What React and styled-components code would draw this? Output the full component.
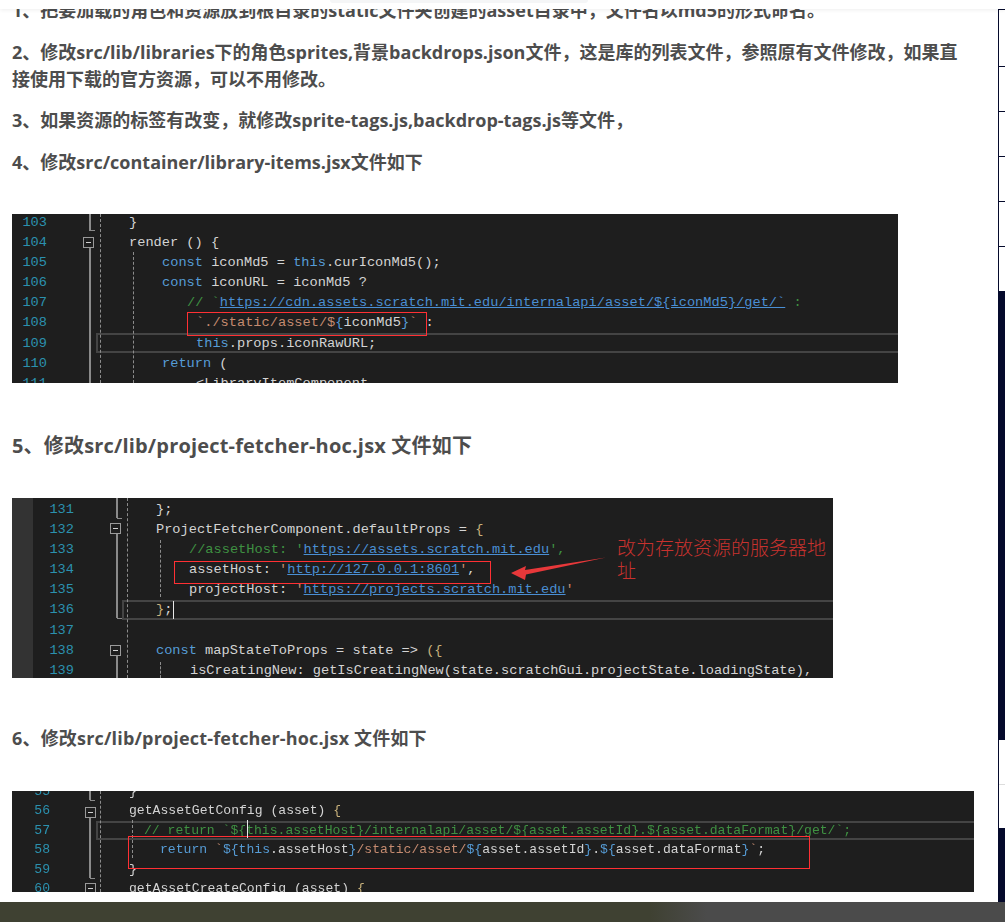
import React from "react";
import styled, { createGlobalStyle } from "styled-components";

const Global = createGlobalStyle`
  html, body { margin: 0; padding: 0; height: 100%; overflow: hidden; background: #fff; }
  #root { height: 100%; }
`;

const Page = styled.div`
  position: relative;
  width: 1005px;
  height: 922px;
  display: grid;
  grid-template-rows: 902px 20px;
  overflow: hidden;
`;
const TopBar = styled.header`
  position: absolute;
  top: 0; left: 0; right: 0;
  height: 9px;
  background: #fff;
  box-shadow: 0 1px 4px rgba(0,0,0,.07);
  padding-left: 330px;
  z-index: 5;
`;
const SearchPill = styled.div`
  width: 258px;
  height: 3px;
  background: #f5f6f7;
  border-radius: 0 0 6px 6px;
`;
const Body = styled.div`
  display: grid;
  grid-template-columns: 998px 7px;
  overflow: hidden;
`;
const Article = styled.main`
  padding: 0 0 0 12px;
  margin-top: -3px;
  font-family: "Open Sans", "Noto Sans CJK SC", sans-serif;
  color: #4d4d4d;
  overflow: hidden;
`;
const Para = styled.p`
  margin: 0 0 ${p => p.$after ?? 14.5}px;
  width: 950px;
  font-size: 18px;
  font-weight: 700;
  line-height: 27px;
  letter-spacing: ${p => p.$track ?? 0}px;
`;
const Heading = styled.h2`
  margin: 0;
  font-size: 20px;
  font-weight: 700;
  line-height: 30px;
  letter-spacing: .18px;
`;
const Shot = styled.div`
  position: relative;
  width: ${p => p.$w}px;
  height: ${p => p.$h}px;
  margin: ${p => p.$top}px 0 ${p => p.$bottom}px;
  overflow: hidden;
  background: ${p => p.$rail
    ? `linear-gradient(90deg, #333 0, #333 ${p.$rail}px, #1e1e1e ${p.$rail}px)`
    : "#1e1e1e"};
  font-family: "Liberation Mono", monospace;
  font-size: ${p => p.$size}px;
  line-height: ${p => p.$lh}px;
  color: #d4d4d4;
`;
const Lines = styled.div`
  margin-top: ${p => p.$shift}px;
  filter: ${p => p.$soft ? "blur(.4px)" : "none"};
`;
const Line = styled.div`
  display: flex;
  height: ${p => p.$lh}px;
  white-space: pre;
`;
const Num = styled.span`
  flex: none;
  width: ${p => p.$w}px;
  text-align: right;
  color: #2b91af;
`;
const Code = styled.span`
  padding-left: ${p => p.$indent}px;
`;
const Kw = styled.span`color: #569cd6;`;
const Str = styled.span`color: #c58b70;`;
const Cm = styled.span`color: #3f9142;`;
const Lk = styled.span`color: #4a8fd4; text-decoration: underline;`;
const Br = styled.span`color: #c9b27c;`;

const Rule = styled.div`
  position: absolute;
  left: ${p => p.$x}px;
  top: ${p => p.$y}px;
  height: ${p => p.$h}px;
  border-left: 2px solid #8a8a8a;
`;
const Tick = styled.div`
  position: absolute;
  left: ${p => p.$x}px;
  top: ${p => p.$y}px;
  width: 5px;
  border-top: 1px solid #8a8a8a;
`;
const Guide = styled.div`
  position: absolute;
  left: ${p => p.$x}px;
  top: ${p => p.$y}px;
  height: ${p => p.$h}px;
  border-left: 1px dashed #8c8c8c;
`;
const Fold = styled.div`
  position: absolute;
  left: ${p => p.$x}px;
  top: ${p => p.$y}px;
  width: 9px;
  height: 9px;
  border: 1px solid #9a9a9a;
  background: #1e1e1e;
  &::after {
    content: "";
    position: absolute;
    left: 2px; right: 2px; top: 4px;
    border-top: 1px solid #d0d0d0;
  }
`;
const CurrentLine = styled.div`
  position: absolute;
  left: ${p => p.$x}px;
  right: 0;
  top: ${p => p.$y}px;
  height: ${p => p.$h}px;
  border: 2px solid #444;
  border-right: 0;
  box-sizing: border-box;
`;
const RedBox = styled.div`
  position: absolute;
  left: ${p => p.$x}px;
  top: ${p => p.$y}px;
  width: ${p => p.$w}px;
  height: ${p => p.$h}px;
  box-sizing: border-box;
  border: 1px solid #ff3034;
`;
const Caret = styled.div`
  position: absolute;
  left: ${p => p.$x}px;
  top: ${p => p.$y}px;
  height: 18px;
  border-left: 1px solid #e8e8e8;
`;
const Note = styled.div`
  position: absolute;
  left: 605px;
  top: 37px;
  width: 212px;
  font-family: "Noto Sans CJK SC", sans-serif;
  font-weight: 300;
  font-size: 19px;
  line-height: 23.5px;
  color: #c8322e;
`;
const ArrowMark = styled.svg`
  position: absolute;
  left: 488px;
  top: 56px;
`;

const Side = styled.aside`
  display: flex;
  flex-direction: column;
  padding-top: 9px;
  background: #050a2c;
  overflow: hidden;
`;
const SideTable = styled.div`
  background: #fff;
  border-left: 1px solid #050a2c;
`;
const SideRow = styled.div`
  height: ${p => p.$h}px;
  box-sizing: border-box;
  border-top: 1px solid #050a2c;
`;
const SideFill = styled.div`
  height: ${p => p.$h}px;
  flex: none;
`;
const SideCard = styled.div`
  height: 88px;
  flex: none;
  margin-left: 1px;
  background: #fff;
  display: flex;
  flex-direction: column;
`;
const SideCardPart = styled.div`
  flex: 1;
  & + & { border-top: 1px solid #ddd; }
`;
const Footer = styled.footer`
  background: linear-gradient(90deg, #3f4132 0, #3f4132 650px, #4b4b4b 707px);
`;

const L = ({ n, indent, g, lh, children }) => (
  <Line $lh={lh}>
    <Num $w={g}>{n}</Num>
    <Code $indent={indent}>{children}</Code>
  </Line>
);

export default function App() {
  const a = { g: 35, lh: 20.2 };
  const b = { g: 62, lh: 20.2 };
  const c = { g: 38, lh: 19.5 };
  return (
    <Page>
      <Global />
      <TopBar><SearchPill /></TopBar>
      <Body>
        <Article>
          <Para>1、把要加载的角色和资源放到根目录的static文件夹创建的asset目录中，文件名以md5的形式命名。</Para>
          <Para>2、修改src/lib/libraries下的角色sprites,背景backdrops.json文件，这是库的列表文件，参照原有文件修改，如果直接使用下载的官方资源，可以不用修改。</Para>
          <Para>3、如果资源的标签有改变，就修改sprite-tags.js,backdrop-tags.js等文件，</Para>
          <Para $after={0}>4、修改src/container/library-items.jsx文件如下</Para>

          <Shot $w={886} $h={169} $top={38.5} $bottom={47.5} $size={13.67} $lh={20.2}>
            <Lines $shift={-1.5}>
              <L n="103" indent={82} {...a}>{"}"}</L>
              <L n="104" indent={82} {...a}>{"render () {"}</L>
              <L n="105" indent={115} {...a}><Kw>const</Kw>{" iconMd5 = "}<Kw>this</Kw>{".curIconMd5();"}</L>
              <L n="106" indent={115} {...a}><Kw>const</Kw>{" iconURL = iconMd5 ?"}</L>
              <L n="107" indent={140} {...a}><Cm>{"// `"}</Cm><Lk>{"https://cdn.assets.scratch.mit.edu/internalapi/asset/${iconMd5}/get/`"}</Lk><Cm>{" :"}</Cm></L>
              <L n="108" indent={149} {...a}><Str>{"`./static/asset/$"}</Str><Kw>{"{"}</Kw>{"iconMd5"}<Kw>{"}"}</Kw><Str>{"`"}</Str>{" :"}</L>
              <L n="109" indent={149} {...a}><Kw>this</Kw>{".props.iconRawURL;"}</L>
              <L n="110" indent={115} {...a}><Kw>return</Kw>{" ("}</L>
              <L n="111" indent={149} {...a}>{"<LibraryItemComponent"}</L>
            </Lines>
            <CurrentLine $x={84} $y={119} $h={20} />
            <Rule $x={77} $y={0} $h={17} />
            <Tick $x={78} $y={16} />
            <Rule $x={77} $y={33} $h={136} />
            <Fold $x={71} $y={23} />
            <Guide $x={88} $y={0} $h={169} />
            <Guide $x={121} $y={38} $h={131} />
            <RedBox $x={175} $y={98} $w={240} $h={24} />
          </Shot>

          <Heading>5、修改src/lib/project-fetcher-hoc.jsx 文件如下</Heading>

          <Shot $w={821} $h={180} $top={37} $bottom={47} $size={13.65} $lh={20.2} $rail={21}>
            <Lines $shift={2}>
              <L n="131" indent={82} {...b}>{"};"}</L>
              <L n="132" indent={82} {...b}>{"ProjectFetcherComponent.defaultProps = "}<Br>{"{"}</Br></L>
              <L n="133" indent={115} {...b}><Cm>{"//assetHost: '"}</Cm><Lk>https://assets.scratch.mit.edu</Lk><Cm>{"',"}</Cm></L>
              <L n="134" indent={115} {...b}>{"assetHost: "}<Str>'</Str><Lk>http://127.0.0.1:8601</Lk><Str>'</Str>{","}</L>
              <L n="135" indent={115} {...b}>{"projectHost: "}<Str>'</Str><Lk>https://projects.scratch.mit.edu</Lk><Str>'</Str></L>
              <L n="136" indent={82} {...b}><Br>{"}"}</Br>{";"}</L>
              <L n="137" indent={82} {...b}>{" "}</L>
              <L n="138" indent={82} {...b}><Kw>const</Kw>{" mapStateToProps = state => "}<Br>{"({"}</Br></L>
              <L n="139" indent={116} {...b}>{"isCreatingNew: getIsCreatingNew(state.scratchGui.projectState.loadingState),"}</L>
            </Lines>
            <CurrentLine $x={110} $y={102} $h={20} />
            <Rule $x={104} $y={0} $h={20} />
            <Tick $x={105} $y={20} />
            <Rule $x={104} $y={36} $h={84} />
            <Tick $x={105} $y={120} />
            <Rule $x={104} $y={158} $h={22} />
            <Fold $x={98} $y={25} />
            <Fold $x={98} $y={147} />
            <Guide $x={115} $y={0} $h={180} />
            <Guide $x={148} $y={42} $h={57} />
            <Guide $x={148} $y={164} $h={16} />
            <RedBox $x={162} $y={63} $w={317} $h={23} />
            <Caret $x={161} $y={103} />
            <ArrowMark width="120" height="40" viewBox="0 0 120 40" aria-hidden="true">
              <polygon points="11,19 26,12 25,16 106,3.5 26,20.5 25,26" fill="#e8383a" />
            </ArrowMark>
            <Note>改为存放资源的服务器地址</Note>
          </Shot>

          <Para $after={0} $track={0.18}>6、修改src/lib/project-fetcher-hoc.jsx 文件如下</Para>

          <Shot $w={962} $h={101} $top={39} $bottom={0} $size={13.1} $lh={19.5}>
            <Lines $shift={-9} $soft>
              <L n="55" indent={79} {...c}>{"}"}</L>
              <L n="56" indent={79} {...c}>{"getAssetGetConfig (asset) "}<Br>{"{"}</Br></L>
              <L n="57" indent={94} {...c}><Cm>{"// return `${this.assetHost}/internalapi/asset/${asset.assetId}.${asset.dataFormat}/get/`;"}</Cm></L>
              <L n="58" indent={110} {...c}><Kw>return</Kw><Str>{" `"}</Str><Kw>{"${this"}</Kw>{".assetHost"}<Kw>{"}"}</Kw><Str>{"/static/asset/"}</Str><Kw>{"${"}</Kw>{"asset.assetId"}<Kw>{"}"}</Kw>{"."}<Kw>{"${"}</Kw>{"asset.dataFormat"}<Kw>{"}"}</Kw><Str>`</Str>{";"}</L>
              <L n="59" indent={79} {...c}>{"}"}</L>
              <L n="60" indent={79} {...c}>{"getAssetCreateConfig (asset) "}<Br>{"{"}</Br></L>
            </Lines>
            <CurrentLine $x={84} $y={30} $h={19} />
            <Rule $x={77} $y={0} $h={9} />
            <Tick $x={78} $y={9} />
            <Rule $x={77} $y={25} $h={62} />
            <Tick $x={78} $y={87} />
            <Fold $x={73} $y={16} />
            <Fold $x={73} $y={92} />
            <Guide $x={88} $y={0} $h={101} />
            <Guide $x={120} $y={29} $h={38} />
            <RedBox $x={116} $y={45} $w={682} $h={33} />
            <Caret $x={235} $y={29} />
          </Shot>
        </Article>
        <Side>
          <SideTable>
            <SideRow $h={57} />
            <SideRow $h={45} />
            <SideRow $h={45} />
            <SideRow $h={45} />
            <SideRow $h={45} />
            <SideRow $h={45} />
          </SideTable>
          <SideFill $h={449} />
          <SideCard>
            <SideCardPart />
            <SideCardPart />
          </SideCard>
          <SideFill $h={74} />
        </Side>
      </Body>
      <Footer />
    </Page>
  );
}
